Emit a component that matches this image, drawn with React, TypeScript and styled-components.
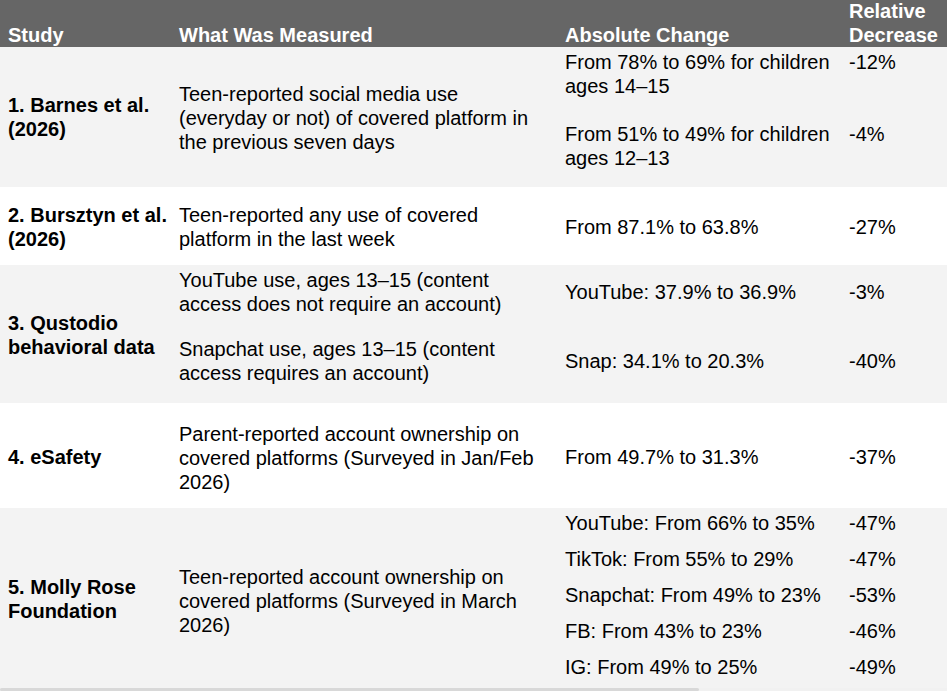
import React from "react";
import styled, { createGlobalStyle } from "styled-components";

const GlobalStyle = createGlobalStyle`
  html, body { margin: 0; padding: 0; background: #ffffff; }
  body {
    font-family: "Liberation Sans", Arial, Helvetica, sans-serif;
    color: #000000;
    overflow: hidden;
  }
  #root { width: 947px; }
`;

const COLUMNS = "171px 386px 284px 106px";

const Table = styled.div`
  width: 947px;
  display: flex;
  flex-direction: column;
  font-size: 20px;
  line-height: 24px;
`;

const HeaderRow = styled.div`
  display: grid;
  grid-template-columns: ${COLUMNS};
  grid-template-rows: 47px;
  background: #666666;
  color: #ffffff;
  font-weight: 700;
`;

const HeadCell = styled.div`
  align-self: end;
  padding-left: 8px;
`;

const BodyRow = styled.div<{ $rows: number[]; $shaded: boolean }>`
  display: grid;
  grid-template-columns: ${COLUMNS};
  grid-template-rows: ${(p) => p.$rows.map((r) => `${r}px`).join(" ")};
  background: ${(p) => (p.$shaded ? "#f3f3f3" : "#ffffff")};
`;

const Cell = styled.div<{ $top: number; $row?: number }>`
  padding: ${(p) => p.$top}px 0 0 8px;
  grid-row: ${(p) => (p.$row ? `${p.$row}` : "1 / -1")};
`;

const StudyCell = styled(Cell)`
  grid-column: 1;
  font-weight: 700;
`;

const MeasuredCell = styled(Cell)`
  grid-column: 2;
  padding-right: 16px;
`;

const ValueCell = styled(Cell)<{ $col: number }>`
  grid-column: ${(p) => p.$col};
`;

const ScrollTrack = styled.div`
  height: 3px;
  background: #f1f1f1;
  display: flex;
`;

const ScrollThumb = styled.div`
  width: 699px;
  background: #d8d8d8;
  border-radius: 2px;
`;

type Measure = { text: string; top: number };
type Change = { abs: string; rel: string; top: number };
type Row = {
  shaded: boolean;
  rows: number[];
  study: string;
  studyTop: number;
  measured: Measure[];
  measuredSplit: boolean;
  changes: Change[];
};

const DATA: Row[] = [
  {
    shaded: true,
    rows: [72, 68],
    study: "1. Barnes et al. (2026)",
    studyTop: 46,
    measured: [
      {
        text: "Teen-reported social media use (everyday or not) of covered platform in the previous seven days",
        top: 35,
      },
    ],
    measuredSplit: false,
    changes: [
      { abs: "From 78% to 69% for children ages 14–15", rel: "-12%", top: 3 },
      { abs: "From 51% to 49% for children ages 12–13", rel: "-4%", top: 3 },
    ],
  },
  {
    shaded: false,
    rows: [78],
    study: "2. Bursztyn et al. (2026)",
    studyTop: 16,
    measured: [{ text: "Teen-reported any use of covered platform in the last week", top: 16 }],
    measuredSplit: false,
    changes: [{ abs: "From 87.1% to 63.8%", rel: "-27%", top: 28 }],
  },
  {
    shaded: true,
    rows: [69, 69],
    study: "3. Qustodio behavioral data",
    studyTop: 46,
    measured: [
      { text: "YouTube use, ages 13–15 (content access does not require an account)", top: 3 },
      { text: "Snapchat use, ages 13–15 (content access requires an account)", top: 3 },
    ],
    measuredSplit: true,
    changes: [
      { abs: "YouTube: 37.9% to 36.9%", rel: "-3%", top: 15 },
      { abs: "Snap: 34.1% to 20.3%", rel: "-40%", top: 15 },
    ],
  },
  {
    shaded: false,
    rows: [105],
    study: "4. eSafety",
    studyTop: 42,
    measured: [
      {
        text: "Parent-reported account ownership on covered platforms (Surveyed in Jan/Feb 2026)",
        top: 19,
      },
    ],
    measuredSplit: false,
    changes: [{ abs: "From 49.7% to 31.3%", rel: "-37%", top: 42 }],
  },
  {
    shaded: true,
    rows: [36, 36, 36, 36, 36],
    study: "5. Molly Rose Foundation",
    studyTop: 67,
    measured: [
      {
        text: "Teen-reported account ownership on covered platforms (Surveyed in March 2026)",
        top: 57,
      },
    ],
    measuredSplit: false,
    changes: [
      { abs: "YouTube: From 66% to 35%", rel: "-47%", top: 3 },
      { abs: "TikTok: From 55% to 29%", rel: "-47%", top: 3 },
      { abs: "Snapchat: From 49% to 23%", rel: "-53%", top: 3 },
      { abs: "FB: From 43% to 23%", rel: "-46%", top: 3 },
      { abs: "IG: From 49% to 25%", rel: "-49%", top: 3 },
    ],
  },
];

export default function App() {
  return (
    <>
      <GlobalStyle />
      <Table>
        <HeaderRow>
          <HeadCell>Study</HeadCell>
          <HeadCell>What Was Measured</HeadCell>
          <HeadCell>Absolute Change</HeadCell>
          <HeadCell>Relative Decrease</HeadCell>
        </HeaderRow>
        {DATA.map((row) => (
          <BodyRow key={row.study} $rows={row.rows} $shaded={row.shaded}>
            <StudyCell $top={row.studyTop}>{row.study}</StudyCell>
            {row.measured.map((m, i) => (
              <MeasuredCell key={m.text} $top={m.top} $row={row.measuredSplit ? i + 1 : undefined}>
                {m.text}
              </MeasuredCell>
            ))}
            {row.changes.map((c, i) => (
              <React.Fragment key={c.abs}>
                <ValueCell $col={3} $top={c.top} $row={i + 1}>
                  {c.abs}
                </ValueCell>
                <ValueCell $col={4} $top={c.top} $row={i + 1}>
                  {c.rel}
                </ValueCell>
              </React.Fragment>
            ))}
          </BodyRow>
        ))}
        <ScrollTrack>
          <ScrollThumb />
        </ScrollTrack>
      </Table>
    </>
  );
}
